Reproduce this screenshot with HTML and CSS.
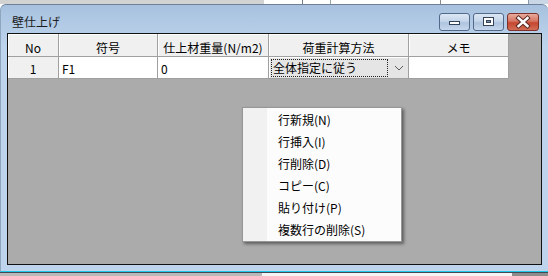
FILE: index.html
```html
<!DOCTYPE html>
<html lang="ja">
<head>
<meta charset="utf-8">
<title>壁仕上げ</title>
<link rel="stylesheet" href="styles.css">
</head>
<body>
<div class="desk-top"></div>
<div class="window">
  <div class="titlebar">
    <span class="title">壁仕上げ</span>
    <div class="caption-buttons">
      <span class="cap cap-min"><svg width="31" height="18" viewBox="0 0 31 18"><rect x="10.5" y="8.5" width="10" height="3" fill="#fff" stroke="#33445a"/></svg></span>
      <span class="cap cap-max"><svg width="31" height="18" viewBox="0 0 31 18"><rect x="10.5" y="4.5" width="10" height="8" fill="#fff" stroke="#33445a"/><rect x="13.5" y="7.5" width="4" height="2" fill="#8094ad" stroke="#33445a"/></svg></span>
      <span class="cap cap-close"><svg width="32" height="18" viewBox="0 0 32 18"><path d="M11.5 5 L20.5 13 M20.5 5 L11.5 13" stroke="#5a2a24" stroke-width="4.4" stroke-linecap="square"/><path d="M11.5 5 L20.5 13 M20.5 5 L11.5 13" stroke="#fff" stroke-width="2.4" stroke-linecap="square"/></svg></span>
    </div>
  </div>
  <div class="client">
    <div class="grid">
      <div class="hcell">No</div>
      <div class="hcell">符号</div>
      <div class="hcell">仕上材重量(N/m2)</div>
      <div class="hcell">荷重計算方法</div>
      <div class="hcell">メモ</div>

      <div class="rowhead">1</div>
      <div class="dcell">F1</div>
      <div class="dcell">0</div>
      <div class="dcell combo-cell">
        <div class="combo">
          <span class="combo-text">全体指定に従う</span>
          <svg class="chev" width="10" height="6" viewBox="0 0 10 6"><path d="M1 1 L5 5 L9 1" fill="none" stroke="#5a5a5a" stroke-width="1"/></svg>
        </div>
      </div>
      <div class="dcell"></div>
    </div>

    <div class="menu">
      <div class="item">行新規(N)</div>
      <div class="item">行挿入(I)</div>
      <div class="item">行削除(D)</div>
      <div class="item">コピー(C)</div>
      <div class="item">貼り付け(P)</div>
      <div class="item">複数行の削除(S)</div>
    </div>
  </div>
</div>
<div class="desk-bottom"></div>
</body>
</html>
```
FILE: styles.css
```css
html, body {
  margin: 0;
  padding: 0;
}
body {
  width: 548px;
  height: 276px;
  overflow: hidden;
  background: #ffffff;
  font-family: "Noto Sans CJK JP", "Noto Sans", sans-serif;
  font-size: 12px;
  color: #000;
}

.desk-top {
  height: 4px;
  background:
    linear-gradient(to right, transparent 0 302px, #6b7b8c 302px 303px, transparent 303px 330px, #9aa 330px 331px, transparent 331px 440px, #8a8a8a 440px 441px, transparent 441px 528px, #8a9aab 528px 529px, #c8d6e6 529px),
    linear-gradient(to right, #d2d2d2 0 264px, #ffffff 264px);
}

.window {
  box-sizing: border-box;
  width: 548px;
  height: 268px;
  border-top: 1px solid #6e8197;
  border-left: 1px solid #8fa6bf;
  border-bottom: 1px solid #1ec8e6;
  border-radius: 6px 6px 0 0;
  padding: 0 6px 6px 6px;
  background: linear-gradient(to bottom, #a7c1de 0, #b7cee8 28px, #bed4ec 40px, #bed4ec 100%);
  display: flex;
  flex-direction: column;
}

.titlebar {
  height: 28px;
  display: flex;
  justify-content: space-between;
  align-items: flex-start;
}
.title {
  padding: 9px 0 0 5px;
  line-height: 16px;
  font-size: 12px;
  color: #1b1b1b;
}
.caption-buttons {
  display: flex;
  margin: 8px 3px 0 0;
  gap: 3px;
}
.cap {
  display: block;
  box-sizing: border-box;
  height: 18px;
  border-radius: 3px;
  overflow: hidden;
}
.cap svg { display: block; margin: -1px; }
.cap-min, .cap-max {
  width: 31px;
  border: 1px solid #53698a;
  background: linear-gradient(to bottom, #dce7f4 0, #c4d5ea 45%, #aec3de 55%, #c5d7ed 100%);
}
.cap-close {
  width: 32px;
  border: 1px solid #7d3128;
  background: linear-gradient(to bottom, #e9ab9c 0, #d57462 45%, #c5472f 55%, #d26d55 100%);
}

.client {
  position: relative;
  box-sizing: border-box;
  height: 232px;
  border: 1px solid #111;
  background: #ababab;
}

.grid {
  display: grid;
  grid-template-columns: 51px 99px 111px 140px 100px;
  grid-template-rows: 23px 22px;
  width: 501px;
}
.hcell, .rowhead, .dcell {
  box-sizing: border-box;
  border-right: 1px solid #a0a0a0;
  border-bottom: 1px solid #a0a0a0;
  line-height: 16px;
  white-space: nowrap;
  overflow: hidden;
}
.hcell {
  background: #f0f0f0;
  box-shadow: inset 1px 1px 0 #ffffff;
  text-align: center;
  padding-top: 6px;
}
.rowhead {
  background: #f0f0f0;
  box-shadow: inset 1px 0 0 #ffffff;
  text-align: center;
  padding-top: 4px;
}
.dcell {
  background: #ffffff;
  padding: 4px 0 0 3px;
}
.combo-cell {
  padding: 1px 0 0 1px;
}
.combo {
  box-sizing: border-box;
  height: 20px;
  width: 138px;
  background: #e5e5e5;
  display: flex;
  align-items: center;
  padding: 1px 0 1px 1px;
}
.combo-text {
  box-sizing: border-box;
  width: 117px;
  height: 18px;
  line-height: 16px;
  border: 1px dotted #222;
  padding-left: 1px;
}
.chev {
  display: block;
  margin-left: 6px;
}

.menu {
  position: absolute;
  left: 234px;
  top: 73px;
  width: 160px;
  box-sizing: border-box;
  border: 1px solid #979797;
  padding-top: 1px;
  background: linear-gradient(to right, #f1f1f1 0 24px, #fcfcfc 24px);
  box-shadow: 2px 2px 3px rgba(0, 0, 0, 0.45);
}
.item {
  height: 22px;
  line-height: 22px;
  padding-left: 35px;
  white-space: nowrap;
}

.desk-bottom {
  height: 4px;
  border-top: 1px solid #3f4a55;
  background: linear-gradient(to right, #b9b9b9 0 262px, #f4f4f4 262px 512px, #8c8c8c 512px);
}
```
